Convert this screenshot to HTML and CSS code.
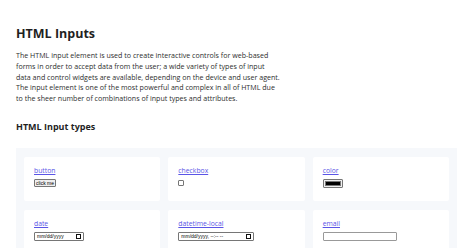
FILE: index.html
```html
<!DOCTYPE html>
<html>
<head>
<meta charset="utf-8">
<link rel="stylesheet" href="styles.css">
</head>
<body>
<main class="page">
  <h1 class="title">HTML Inputs</h1>
  <p class="intro">The HTML input element is used to create interactive controls for web-based forms in order to accept data from the user; a wide variety of types of input data and control widgets are available, depending on the device and user agent. The input element is one of the most powerful and complex in all of HTML due to the sheer number of combinations of input types and attributes.</p>
  <h2 class="subtitle">HTML Input types</h2>
  <section class="grid">
    <div class="card"><a class="label" href="#">button</a><div class="ctl"><button class="btn">click me</button></div></div>
    <div class="card"><a class="label" href="#">checkbox</a><div class="ctl"><span class="check"></span></div></div>
    <div class="card"><a class="label" href="#">color</a><div class="ctl"><span class="color"><span class="swatch"></span></span></div></div>
    <div class="card"><a class="label" href="#">date</a><div class="ctl"><span class="field date">mm/dd/yyyy<span class="cal"></span></span></div></div>
    <div class="card"><a class="label" href="#">datetime-local</a><div class="ctl"><span class="field dtl">mm/dd/yyyy, --:-- --<span class="cal"></span></span></div></div>
    <div class="card"><a class="label" href="#">email</a><div class="ctl"><span class="field email"></span></div></div>
  </section>
</main>
</body>
</html>
```
FILE: styles.css
```css
html, body { margin: 0; padding: 0; background: #fff; }
body { font-family: "Open Sans", "Liberation Sans", sans-serif; color: #2b2b2b; }
.page { padding: 0 17px 0 16px; }
.title { font-size: 12.5px; font-weight: 700; margin: 0; padding-top: 26px; line-height: 16px; color: #1f1f1f; }
.intro { font-size: 7.1px; line-height: 10.75px; margin: 8px 0 0; width: 264px; color: #2e2e2e; }
.subtitle { font-size: 9px; font-weight: 700; margin: 17px 0 0; line-height: 12px; color: #1f1f1f; }
.grid { margin-top: 15px; background: #f6f8fb; padding: 9px 8px; display: grid; grid-template-columns: repeat(3, 1fr); gap: 9px 8px; }
.card { background: #fff; border-radius: 2px; padding: 9px 10px 8px; height: 44px; box-sizing: border-box; display: flex; flex-direction: column; gap: 3px; }
.label { font-family: "Open Sans", sans-serif; font-size: 6.8px; line-height: 9px; color: #5a55e6; text-decoration: underline; align-self: flex-start; }
.ctl { display: flex; align-items: center; height: 11px; }
.btn { font-family: "Liberation Sans", sans-serif; font-size: 5px; line-height: 6px; padding: 0 1px; margin: 0; background: #efefef; border: 1px solid #767676; border-radius: 1px; color: #000; height: 8px; }
.check { width: 4px; height: 4px; border: 1px solid #767676; border-radius: 1px; background: #fff; }
.color { width: 20px; height: 9px; box-sizing: border-box; border: 1px solid #767676; border-radius: 1px; background: #efefef; padding: 1px; display: flex; }
.swatch { flex: 1; background: #000; border: 0.5px solid #777; }
.field { font-family: "Liberation Sans", sans-serif; font-size: 5px; line-height: 8px; height: 9px; box-sizing: border-box; border: 1px solid #767676; border-radius: 1px; padding: 0 2px; color: #000; display: flex; align-items: center; justify-content: space-between; }
.date { width: 50px; }
.dtl { width: 76px; }
.email { width: 74px; border-color: #999; }
.cal { width: 3px; height: 3px; border: 1px solid #111; border-top-width: 1.5px; }
```
